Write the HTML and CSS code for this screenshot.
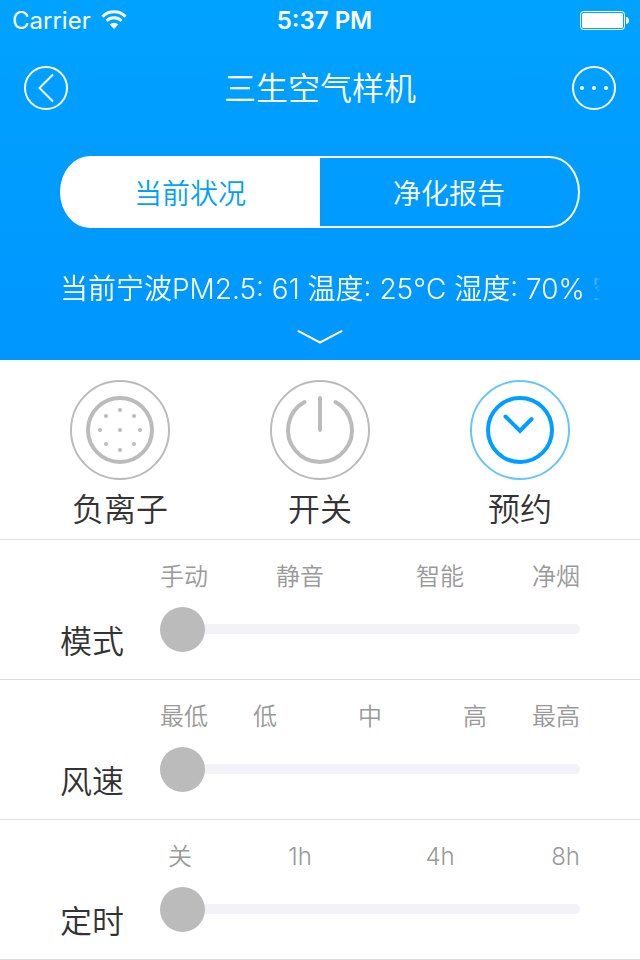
FILE: index.html
```html
<!DOCTYPE html>
<html lang="zh-CN">
<head>
<meta charset="utf-8">
<meta name="viewport" content="width=device-width, initial-scale=1">
<title>三生空气样机</title>
<link rel="stylesheet" href="styles.css">
</head>
<body>
<header class="header">
  <div class="status">
    <div class="status-carrier">
      <span>Carrier</span>
      <svg width="26" height="20" viewBox="0 0 26 20" aria-hidden="true">
        <g fill="none" stroke="#fff" stroke-width="3">
          <path d="M1.5 6.6a16.2 16.2 0 0 1 23 0"/>
          <path d="M5.6 10.8a10.5 10.5 0 0 1 14.8 0"/>
        </g>
        <path d="M13 19l-4.3-4.4a6.2 6.2 0 0 1 8.6 0z" fill="#fff"/>
      </svg>
    </div>
    <div class="status-time">5:37 PM</div>
    <div class="status-battery">
      <svg width="49" height="19" viewBox="0 0 49 19" aria-hidden="true">
        <rect x=".5" y=".5" width="44" height="18" rx="3" fill="none" stroke="#fff"/>
        <rect x="2" y="2" width="41" height="15" rx="1.5" fill="#fff"/>
        <path d="M46 6c4 0 4 7 0 7z" fill="#fff"/>
      </svg>
    </div>
  </div>
  <nav class="nav">
    <button class="round" type="button" aria-label="返回">
      <svg width="44" height="44" viewBox="0 0 44 44" fill="none" stroke="#fff" aria-hidden="true">
        <circle cx="22" cy="22" r="21" stroke-width="2"/>
        <path d="M29 8.500L15.500 22 29 35.500" stroke-width="2"/>
      </svg>
    </button>
    <h1 class="title">三生空气样机</h1>
    <button class="round" type="button" aria-label="更多">
      <svg width="44" height="44" viewBox="0 0 44 44" aria-hidden="true">
        <circle cx="22" cy="22" r="21" fill="none" stroke="#fff" stroke-width="2"/>
        <g fill="#fff"><circle cx="10" cy="22" r="2"/><circle cx="22" cy="22" r="2"/><circle cx="34" cy="22" r="2"/></g>
      </svg>
    </button>
  </nav>
  <div class="segments">
    <button class="segment segment-on" type="button" aria-pressed="true">当前状况</button>
    <button class="segment" type="button" aria-pressed="false">净化报告</button>
  </div>
  <p class="ticker">当前宁波PM2.5: 61 温度: 25°C 湿度: 70% 空</p>
  <button class="expand" type="button" aria-label="展开">
    <svg width="46" height="14" viewBox="0 0 46 14" fill="none" stroke="#fff" stroke-width="2" stroke-linecap="round" aria-hidden="true"><path d="M1.500 1.200L23 12.500 44.500 1.200"/></svg>
  </button>
</header>
<main>
  <section class="controls">
    <button class="control" type="button">
      <svg width="100" height="100" viewBox="0 0 100 100" fill="none" stroke="#bbb" aria-hidden="true">
        <circle cx="50" cy="50" r="49" stroke-width="2"/>
        <circle cx="50" cy="50" r="32" stroke-width="4"/>
        <g fill="#bbb" stroke="none">
          <circle cx="50" cy="50" r="2"/><circle cx="50" cy="30" r="2"/><circle cx="50" cy="70" r="2"/>
          <circle cx="30" cy="50" r="2"/><circle cx="70" cy="50" r="2"/><circle cx="36" cy="36" r="2"/>
          <circle cx="64" cy="36" r="2"/><circle cx="36" cy="64" r="2"/><circle cx="64" cy="64" r="2"/>
        </g>
      </svg>
      <span>负离子</span>
    </button>
    <button class="control" type="button">
      <svg width="100" height="100" viewBox="0 0 100 100" fill="none" stroke="#bbb" aria-hidden="true">
        <circle cx="50" cy="50" r="49" stroke-width="2"/>
        <path d="M34.500 22A32 32 0 1 0 65.500 22M50 18V50" stroke-width="4" stroke-linecap="round"/>
      </svg>
      <span>开关</span>
    </button>
    <button class="control" type="button">
      <svg width="100" height="100" viewBox="0 0 100 100" fill="none" stroke="#009fff" aria-hidden="true">
        <circle cx="50" cy="50" r="49" stroke="#66c5ff" stroke-width="2"/>
        <circle cx="50" cy="50" r="32" stroke-width="4"/>
        <path d="M35.500 36.500L50 51 61.500 39" stroke-width="4" stroke-linecap="round"/>
      </svg>
      <span>预约</span>
    </button>
  </section>
  <section class="setting">
    <label class="setting-name" for="mode">模式</label>
    <div class="setting-body">
      <ul class="ticks"><li><span>手动</span></li><li>静音</li><li>智能</li><li>净烟</li></ul>
      <input class="slider" id="mode" type="range" min="0" max="3" value="0">
    </div>
  </section>
  <section class="setting">
    <label class="setting-name" for="speed">风速</label>
    <div class="setting-body">
      <ul class="ticks ticks-five"><li><span>最低</span></li><li>低</li><li>中</li><li>高</li><li>最高</li></ul>
      <input class="slider" id="speed" type="range" min="0" max="4" value="0">
    </div>
  </section>
  <section class="setting">
    <label class="setting-name" for="timer">定时</label>
    <div class="setting-body">
      <ul class="ticks"><li><span>关</span></li><li>1h</li><li>4h</li><li>8h</li></ul>
      <input class="slider" id="timer" type="range" min="0" max="3" value="0">
    </div>
  </section>
</main>
</body>
</html>
```
FILE: styles.css
```css
* {
  box-sizing: border-box;
}

body {
  margin: 0;
  background: #fff;
  color: #333;
  font-family: Inter, "Noto Sans CJK SC", sans-serif;
  font-weight: 350;
}

button {
  margin: 0;
  padding: 0;
  border: 0;
  background: none;
  color: inherit;
  font: inherit;
  cursor: pointer;
}

svg {
  display: block;
}

.header {
  background: linear-gradient(#00a2ff, #0096ff);
  color: #fff;
}

.status {
  display: grid;
  grid-template-columns: 1fr auto 1fr;
  align-items: center;
  height: 40px;
  padding: 0 11px 0 12px;
  font-size: 24px;
  font-weight: 400;
  line-height: 38px;
}

.status-carrier,
.status-time {
  padding-top: 2px;
}

.status-carrier {
  display: flex;
  align-items: center;
  gap: 10px;
}

.status-carrier svg {
  margin-bottom: 2px;
}

.status-time {
  padding-left: 8px;
  font-weight: 600;
}

.status-battery {
  justify-self: end;
}

.nav {
  display: flex;
  align-items: center;
  justify-content: space-between;
  height: 96px;
  padding: 0 24px;
}

.title {
  margin: 0;
  padding-top: 2px;
  font-size: 32px;
  font-weight: inherit;
  line-height: 40px;
}

.segments {
  display: grid;
  grid-template-columns: 1fr 1fr;
  height: 72px;
  margin: 20px 60px 0;
  font-size: 28px;
}

.segment {
  border: 2px solid #fff;
  border-left: 0;
  border-radius: 0 30px 30px 0 / 0 36px 36px 0;
}

.segment-on {
  border: 0;
  border-radius: 30px 0 0 30px / 36px 0 0 36px;
  background: #fff;
  color: #009fff;
}

.ticker {
  margin: 40px 40px 0 60px;
  overflow: hidden;
  font-size: 28px;
  line-height: 42px;
  white-space: nowrap;
  -webkit-mask-image: linear-gradient(to left, transparent, #000 16px);
  mask-image: linear-gradient(to left, transparent, #000 16px);
}

.expand {
  display: flex;
  align-items: center;
  justify-content: center;
  width: 100%;
  height: 50px;
  padding-top: 4px;
}

.controls {
  display: grid;
  grid-template-columns: repeat(3, 1fr);
  padding: 20px 20px 9px;
  border-bottom: 1px solid #ddd;
}

.control {
  display: flex;
  flex-direction: column;
  align-items: center;
  gap: 10px;
  font-size: 32px;
  line-height: 40px;
}

.setting {
  display: grid;
  grid-template-columns: 100px 1fr;
  height: 140px;
  padding: 0 60px;
  border-bottom: 1px solid #ddd;
}

.setting-name {
  padding-top: 82px;
  font-size: 32px;
  line-height: 40px;
}

.ticks {
  display: grid;
  grid-template-columns: 1fr 2fr 2fr 1fr;
  margin: 0;
  padding: 22px 0 14px;
  color: #999;
  font-size: 24px;
  line-height: 30px;
  list-style: none;
  text-align: center;
  white-space: nowrap;
}

.ticks-five {
  grid-template-columns: 1fr 2fr 2fr 2fr 1fr;
}

.ticks li:first-child {
  display: flex;
}

.ticks li:first-child span {
  min-width: 40px;
}

.ticks li:last-child {
  text-align: right;
}

.slider {
  display: block;
  width: 100%;
  height: 45px;
  margin: 0;
  background: transparent;
  -webkit-appearance: none;
  appearance: none;
}

.slider::-webkit-slider-runnable-track {
  height: 10px;
  border-radius: 5px;
  background: #f2f2f8;
}

.slider::-webkit-slider-thumb {
  width: 45px;
  height: 45px;
  margin-top: -17px;
  border-radius: 50%;
  background: #bbb;
  -webkit-appearance: none;
  appearance: none;
}
```
